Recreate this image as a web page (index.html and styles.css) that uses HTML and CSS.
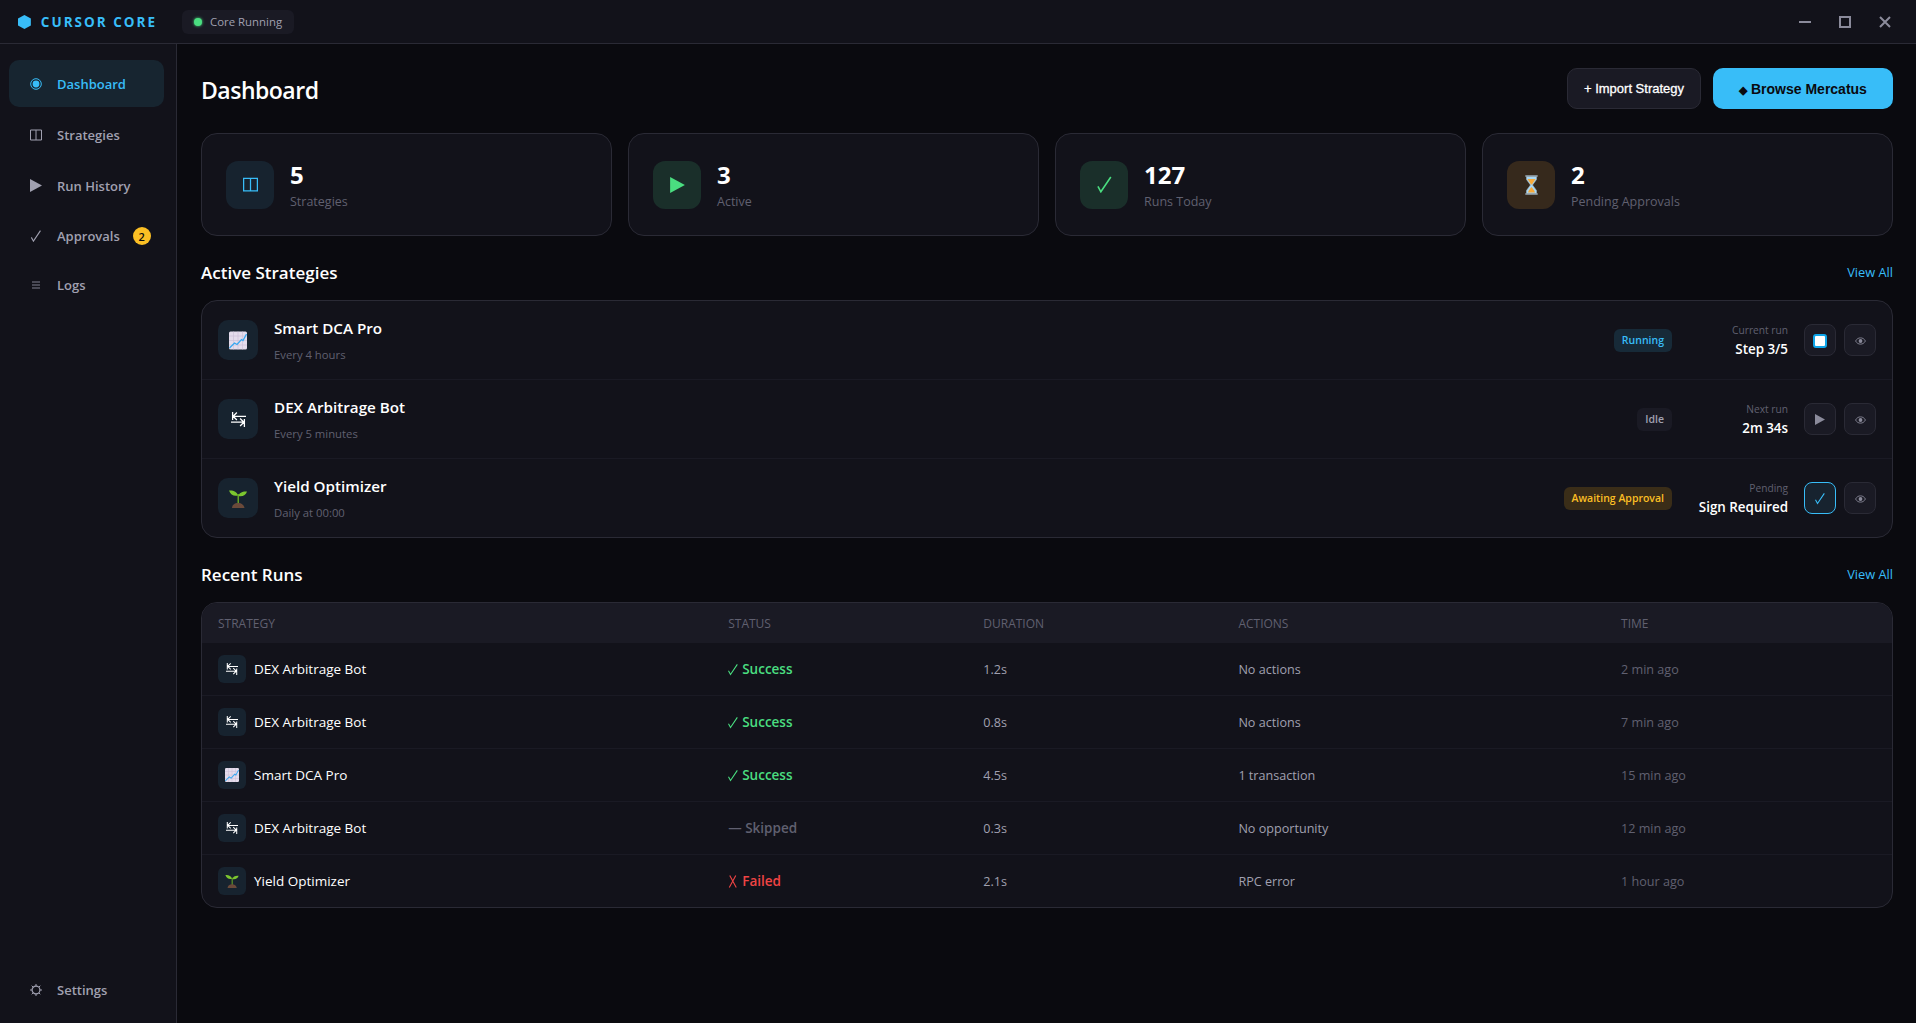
FILE: index.html
```html
<!DOCTYPE html>
<html lang="en">
<head>
  <meta charset="UTF-8" />
  <title>Cursor Core</title>
  <link rel="stylesheet" href="styles.css">
</head>
<body>

  <svg class="sprites" xmlns="http://www.w3.org/2000/svg">
    <symbol id="i-columns" viewBox="0 0 12 12"><path d="M.5 1h11v10H.5zM6 1v10" fill="none" stroke="currentColor"/></symbol>
    <symbol id="i-play" viewBox="0 0 12 13"><path d="M0 0l12 6.500L0 13z" fill="currentColor"/></symbol>
    <symbol id="i-check" viewBox="0 0 12 14"><path d="M.6 8.600L3 13 11.200.8" fill="none" stroke="currentColor" stroke-width="1.300"/></symbol>
    <symbol id="i-chart" viewBox="0 0 18 18">
      <rect width="18" height="18" rx="1.500" fill="#e4dcec"/>
      <path d="M0 4.500h18M0 9h18M0 13.500h18M4.500 0v18M9 0v18M13.500 0v18" stroke="#c9bdd6" stroke-width=".6"/>
      <path d="M.5 16.500l5-5 2.500 1.500 4.500-5 1.500 1 3.500-6.500" fill="none" stroke="#38a8f0" stroke-width="1.300"/>
    </symbol>
    <symbol id="i-swap" viewBox="0 0 14 14">
      <path d="M1 4h13M1.500 0v7.500M2 4l3.500-3.500M2 4l3.500 3.500M0 9.500h13M12.500 6.500V14M12 9.500L8.500 6M12 9.500L8.500 13" fill="none" stroke="#fff" stroke-width="1.200"/>
    </symbol>
    <symbol id="i-sprout" viewBox="0 0 18 19">
      <path d="M8.500 5h1.500v10H8.500z" fill="#63a224"/>
      <path d="M0 1.500C4 1 8 2.500 9 6.500 5 7.500 1.500 6 0 1.500zM9.500 7C10 3.500 14 2 18 2.500 17 6 13.500 8 9.500 7z" fill="#7cc62f"/>
      <path d="M3 19c0-3 2.700-5 6-5 3.500 0 6 2 6.500 5z" fill="#6b4a3a"/>
    </symbol>
    <symbol id="i-hourglass" viewBox="0 0 14 20">
      <path d="M2 1.500h10v3L8 10l4 5.500v3H2v-3L6 10 2 4.500z" fill="#a9d8f5" stroke="#9fb8c8" stroke-width=".6"/>
      <path d="M3 4h8L7.500 9.500h-1zM3.500 17.500c.8-2.500 2-4 3.500-5.500 1.500 1.500 2.700 3 3.500 5.500z" fill="#f6a93b"/>
      <path d="M.8 1h12.400M.8 19h12.400" stroke="#9aa9b3" stroke-width="1.600"/>
    </symbol>
    <symbol id="i-eye" viewBox="0 0 14 10">
      <path d="M.7 5C2.500 2 4.500 1 7 1s4.500 1 6.300 4C11.500 8 9.500 9 7 9S2.500 8 .7 5z" fill="none" stroke="currentColor" stroke-width="1.100"/>
      <circle cx="7" cy="5" r="2.400" fill="currentColor"/>
    </symbol>
  </svg>

  <header class="titlebar">
    <div class="brand">
      <svg class="brand-icon" viewBox="0 0 13 14"><path d="M6.500 0L13 3.500v7L6.500 14 0 10.500v-7z" fill="currentColor"/></svg>
      <span class="brand-name">CURSOR CORE</span>
    </div>
    <div class="core-status"><span class="core-dot"></span>Core Running</div>
    <div class="window-controls">
      <span class="window-btn"><svg viewBox="0 0 12 12"><path d="M0 6h12"/></svg></span>
      <span class="window-btn"><svg viewBox="0 0 12 12"><path d="M1 1h10v10H1z"/></svg></span>
      <span class="window-btn"><svg viewBox="0 0 12 12"><path d="M1 1l10 10M11 1L1 11"/></svg></span>
    </div>
  </header>

  <div class="layout">
    <nav class="sidebar">
      <a class="nav-item active">
        <svg class="nav-icon" viewBox="0 0 12 12"><circle cx="6" cy="6" r="5.300" fill="none" stroke="currentColor"/><circle cx="6" cy="6" r="3.400" fill="currentColor"/></svg>
        Dashboard
      </a>
      <a class="nav-item"><svg class="nav-icon"><use href="#i-columns"/></svg>Strategies</a>
      <a class="nav-item"><svg class="nav-icon nav-icon-play"><use href="#i-play"/></svg>Run History</a>
      <a class="nav-item nav-item-46"><svg class="nav-icon"><use href="#i-check"/></svg>Approvals<span class="nav-badge">2</span></a>
      <a class="nav-item nav-item-44">
        <svg class="nav-icon nav-icon-small" viewBox="0 0 8 8"><path d="M0 1h8M0 4h8M0 7h8" stroke="currentColor" stroke-width=".8"/></svg>
        Logs
      </a>
      <a class="nav-item nav-settings">
        <svg class="nav-icon" viewBox="0 0 12 12"><circle cx="6" cy="6" r="3.900" fill="none" stroke="currentColor" stroke-width="1.200"/><path d="M6 0v2M6 10v2M0 6h2M10 6h2M1.700 1.700l1.400 1.400M8.900 8.900l1.400 1.400M1.700 10.300l1.400-1.400M8.900 3.100l1.400-1.400" stroke="currentColor"/></svg>
        Settings
      </a>
    </nav>

    <main class="main">
      <div class="page-header">
        <h1>Dashboard</h1>
        <div class="page-actions">
          <button class="btn">+ Import Strategy</button>
          <button class="btn btn-primary"><span class="btn-diamond">◆</span> Browse Mercatus</button>
        </div>
      </div>

      <div class="stats">
        <div class="stat-card">
          <div class="stat-icon blue"><svg class="stat-svg-columns"><use href="#i-columns"/></svg></div>
          <div><div class="stat-value">5</div><div class="stat-label">Strategies</div></div>
        </div>
        <div class="stat-card">
          <div class="stat-icon green"><svg class="stat-svg-play"><use href="#i-play"/></svg></div>
          <div><div class="stat-value">3</div><div class="stat-label">Active</div></div>
        </div>
        <div class="stat-card">
          <div class="stat-icon green"><svg class="stat-svg-check"><use href="#i-check"/></svg></div>
          <div><div class="stat-value">127</div><div class="stat-label">Runs Today</div></div>
        </div>
        <div class="stat-card">
          <div class="stat-icon amber"><svg class="stat-svg-hourglass"><use href="#i-hourglass"/></svg></div>
          <div><div class="stat-value">2</div><div class="stat-label">Pending Approvals</div></div>
        </div>
      </div>

      <div class="section-head">
        <h2>Active Strategies</h2>
        <a class="view-all">View All</a>
      </div>
      <div class="panel">
        <div class="strategy">
          <div class="strategy-icon"><svg class="icon-chart"><use href="#i-chart"/></svg></div>
          <div class="strategy-info"><div class="strategy-name">Smart DCA Pro</div><div class="strategy-sub">Every 4 hours</div></div>
          <span class="badge badge-running">Running</span>
          <div class="strategy-meta"><div class="meta-label">Current run</div><div class="meta-value">Step 3/5</div></div>
          <div class="strategy-actions">
            <span class="icon-btn"><span class="stop-glyph"></span></span>
            <span class="icon-btn"><svg class="icon-eye"><use href="#i-eye"/></svg></span>
          </div>
        </div>
        <div class="strategy">
          <div class="strategy-icon"><svg class="icon-swap"><use href="#i-swap"/></svg></div>
          <div class="strategy-info"><div class="strategy-name">DEX Arbitrage Bot</div><div class="strategy-sub">Every 5 minutes</div></div>
          <span class="badge badge-idle">Idle</span>
          <div class="strategy-meta"><div class="meta-label">Next run</div><div class="meta-value">2m 34s</div></div>
          <div class="strategy-actions">
            <span class="icon-btn"><svg class="icon-play"><use href="#i-play"/></svg></span>
            <span class="icon-btn"><svg class="icon-eye"><use href="#i-eye"/></svg></span>
          </div>
        </div>
        <div class="strategy">
          <div class="strategy-icon"><svg class="icon-chart"><use href="#i-sprout"/></svg></div>
          <div class="strategy-info"><div class="strategy-name">Yield Optimizer</div><div class="strategy-sub">Daily at 00:00</div></div>
          <span class="badge badge-awaiting">Awaiting Approval</span>
          <div class="strategy-meta"><div class="meta-label">Pending</div><div class="meta-value">Sign Required</div></div>
          <div class="strategy-actions">
            <span class="icon-btn icon-btn-accent"><svg class="icon-check"><use href="#i-check"/></svg></span>
            <span class="icon-btn"><svg class="icon-eye"><use href="#i-eye"/></svg></span>
          </div>
        </div>
      </div>

      <div class="section-head">
        <h2>Recent Runs</h2>
        <a class="view-all">View All</a>
      </div>
      <div class="panel">
        <div class="run run-head">
          <span>Strategy</span><span>Status</span><span>Duration</span><span>Actions</span><span>Time</span>
        </div>
        <div class="run">
          <span class="run-name"><span class="run-icon"><svg class="icon-swap-small"><use href="#i-swap"/></svg></span>DEX Arbitrage Bot</span>
          <span class="run-status success"><svg class="status-check"><use href="#i-check"/></svg>Success</span>
          <span class="run-cell">1.2s</span><span class="run-cell">No actions</span><span class="run-cell run-time">2 min ago</span>
        </div>
        <div class="run">
          <span class="run-name"><span class="run-icon"><svg class="icon-swap-small"><use href="#i-swap"/></svg></span>DEX Arbitrage Bot</span>
          <span class="run-status success"><svg class="status-check"><use href="#i-check"/></svg>Success</span>
          <span class="run-cell">0.8s</span><span class="run-cell">No actions</span><span class="run-cell run-time">7 min ago</span>
        </div>
        <div class="run">
          <span class="run-name"><span class="run-icon"><svg class="icon-chart-small"><use href="#i-chart"/></svg></span>Smart DCA Pro</span>
          <span class="run-status success"><svg class="status-check"><use href="#i-check"/></svg>Success</span>
          <span class="run-cell">4.5s</span><span class="run-cell">1 transaction</span><span class="run-cell run-time">15 min ago</span>
        </div>
        <div class="run">
          <span class="run-name"><span class="run-icon"><svg class="icon-swap-small"><use href="#i-swap"/></svg></span>DEX Arbitrage Bot</span>
          <span class="run-status skipped">— Skipped</span>
          <span class="run-cell">0.3s</span><span class="run-cell">No opportunity</span><span class="run-cell run-time">12 min ago</span>
        </div>
        <div class="run">
          <span class="run-name"><span class="run-icon"><svg class="icon-chart-small"><use href="#i-sprout"/></svg></span>Yield Optimizer</span>
          <span class="run-status failed"><svg class="status-x" viewBox="0 0 10 14"><path d="M1.500.5L8.500 13.500M8 .5L1 13.500" fill="none" stroke="currentColor" stroke-width="1.200"/></svg>Failed</span>
          <span class="run-cell">2.1s</span><span class="run-cell">RPC error</span><span class="run-cell run-time">1 hour ago</span>
        </div>
      </div>
    </main>
  </div>

</body>
</html>
```

FILE: styles.css
```css
html, body {
  margin: 0;
  padding: 0;
  height: 100%;
  overflow: hidden;
  background: #0a0a0f;
  color: #fff;
  font-family: "Open Sans", "Noto Sans", sans-serif;
}

.sprites {
  display: none;
}

/* title bar */
.titlebar {
  display: flex;
  align-items: center;
  height: 43px;
  padding: 0 11px 0 18px;
  background: #12121a;
  border-bottom: 1px solid #2a2a35;
}

.brand {
  display: flex;
  align-items: center;
  gap: 10px;
  width: 139px;
  color: #38bdf8;
}

.brand-icon {
  width: 13px;
  height: 14px;
}

.brand-name {
  font-size: 13.500px;
  font-weight: 700;
  letter-spacing: 2px;
  white-space: nowrap;
}

.core-status {
  display: flex;
  align-items: center;
  gap: 8px;
  height: 24px;
  margin-left: 25px;
  padding: 0 12px;
  border-radius: 6px;
  background: #1a1a24;
  color: #a0a0b0;
  font-size: 11.400px;
}

.core-dot {
  width: 8px;
  height: 8px;
  border-radius: 50%;
  background: #4ade80;
  box-shadow: 0 0 3px #4ade80;
}

.window-controls {
  display: flex;
  margin-left: auto;
}

.window-btn {
  display: flex;
  align-items: center;
  justify-content: center;
  width: 40px;
  height: 32px;
}

.window-btn svg {
  width: 12px;
  height: 12px;
  fill: none;
  stroke: #8b8b9b;
  stroke-width: 2;
}

/* layout */
.layout {
  display: flex;
  height: 979px;
}

.sidebar {
  display: flex;
  flex-direction: column;
  gap: 4px;
  flex: none;
  box-sizing: border-box;
  width: 177px;
  padding: 16px 12px 10px 9px;
  background: #12121a;
  border-right: 1px solid #2a2a35;
}

.nav-item {
  display: flex;
  align-items: center;
  height: 47px;
  padding-left: 21px;
  border-radius: 10px;
  color: #a0a0b0;
  font-size: 13px;
  font-weight: 600;
}

.nav-item-46 {
  height: 46px;
}

.nav-item-44 {
  height: 44px;
}

.nav-item.active {
  background: #172530;
  color: #38bdf8;
}

.nav-settings {
  margin-top: auto;
}

.nav-icon {
  flex: none;
  width: 12px;
  height: 12px;
  margin-right: 15px;
}

.nav-icon-play {
  height: 13px;
}

.nav-icon-small {
  width: 8px;
  height: 8px;
  margin: 0 17px 0 2px;
}

.nav-badge {
  display: flex;
  align-items: center;
  justify-content: center;
  width: 18px;
  height: 18px;
  margin-left: 13px;
  border-radius: 50%;
  background: #fbbf24;
  color: #0a0a0f;
  font-size: 11px;
  font-weight: 600;
}

/* main */
.main {
  flex: 1;
  min-width: 0;
  padding: 24px 23px 0 24px;
}

.page-header {
  display: flex;
  align-items: center;
  justify-content: space-between;
  margin-bottom: 24px;
}

h1 {
  margin: 2px 0 0;
  font-size: 23px;
  font-weight: 600;
  letter-spacing: -0.5px;
}

.page-actions {
  display: flex;
  gap: 12px;
}

.btn {
  height: 41px;
  width: 134px;
  padding: 0;
  border: 1px solid #2a2a35;
  border-radius: 10px;
  background: #1a1a24;
  color: #fff;
  font-family: "Liberation Sans", Arial, sans-serif;
  font-size: 13px;
  font-weight: 400;
  -webkit-text-stroke: 0.3px #fff;
}

.btn-primary {
  width: 180px;
  border: 0;
  background: #38bdf8;
  color: #0a0a0f;
  font-size: 14px;
  font-weight: 700;
  -webkit-text-stroke: 0;
}

.btn-diamond {
  font-size: 11px;
}

.stats {
  display: grid;
  grid-template-columns: repeat(4, 1fr);
  gap: 16px;
}

.stat-card {
  display: flex;
  align-items: center;
  gap: 16px;
  height: 103px;
  box-sizing: border-box;
  padding: 0 24px;
  border: 1px solid #2a2a35;
  border-radius: 16px;
  background: #12121a;
}

.stat-icon {
  display: flex;
  align-items: center;
  justify-content: center;
  flex: none;
  width: 48px;
  height: 48px;
  border-radius: 12px;
}

.stat-icon.blue {
  background: #17232f;
  color: #38bdf8;
}

.stat-icon.green {
  background: #1a2f2a;
  color: #4ade80;
}

.stat-icon.amber {
  background: #36291c;
}

.stat-svg-columns {
  width: 15px;
  height: 15px;
}

.stat-svg-play {
  width: 15px;
  height: 16px;
}

.stat-svg-check {
  width: 15px;
  height: 17px;
}

.stat-svg-hourglass {
  width: 15px;
  height: 20px;
}

.stat-value {
  margin-top: 2px;
  font-size: 24px;
  font-weight: 700;
  line-height: 32px;
}

.stat-label {
  margin-top: 1px;
  color: #606070;
  font-size: 12.500px;
  line-height: 20px;
}

.section-head {
  display: flex;
  align-items: center;
  justify-content: space-between;
  height: 24px;
  margin: 24px 0 16px;
}

h2 {
  margin: 0;
  font-size: 17px;
  font-weight: 600;
}

.view-all {
  color: #38bdf8;
  font-size: 12.800px;
  font-weight: 500;
}

.panel {
  overflow: hidden;
  border: 1px solid #2a2a35;
  border-radius: 16px;
  background: #12121a;
}

/* strategies */
.strategy {
  display: flex;
  align-items: center;
  box-sizing: border-box;
  height: 79px;
  padding: 0 16px;
  border-bottom: 1px solid #1a1a24;
}

.strategy:last-child {
  height: 78px;
  border-bottom: 0;
}

.strategy-icon {
  display: flex;
  align-items: center;
  justify-content: center;
  flex: none;
  width: 40px;
  height: 40px;
  border-radius: 10px;
  background: #17232f;
}

.icon-chart {
  width: 18px;
  height: 19px;
}

.icon-swap {
  width: 15px;
  height: 15px;
}

.strategy-info {
  flex: 1;
  margin-left: 16px;
}

.strategy-name {
  font-size: 15.200px;
  font-weight: 600;
  line-height: 20px;
  margin-bottom: 8px;
}

.strategy-sub {
  margin-top: 9px;
  color: #606070;
  font-size: 11.300px;
  line-height: 16px;
}

.badge {
  height: 23px;
  padding: 0 8px;
  border-radius: 6px;
  font-size: 10.500px;
  font-weight: 600;
  line-height: 23px;
}

.badge-running {
  background: #172a38;
  color: #38bdf8;
}

.badge-idle {
  background: #1a1a24;
  color: #a0a0b0;
}

.badge-awaiting {
  background: #3a2d18;
  color: #fbbf24;
}

.strategy-meta {
  width: 100px;
  margin-left: 16px;
  text-align: right;
}

.meta-label {
  color: #606070;
  font-size: 10.200px;
  line-height: 16px;
}

.meta-value {
  margin-top: 1px;
  font-size: 13.400px;
  font-weight: 600;
  line-height: 20px;
}

.strategy-actions {
  display: flex;
  gap: 8px;
  margin-left: 16px;
}

.icon-btn {
  display: flex;
  align-items: center;
  justify-content: center;
  box-sizing: border-box;
  width: 32px;
  height: 32px;
  border: 1px solid #2a2a35;
  border-radius: 8px;
  background: #1a1a24;
  color: #8b8b9b;
}

.icon-btn-accent {
  border-color: #38bdf8;
  background: #17232f;
  color: #38bdf8;
}

.stop-glyph {
  box-sizing: border-box;
  width: 14px;
  height: 14px;
  margin-top: 2px;
  border: 2px solid #0ea5e9;
  border-radius: 3px;
  background: #fff;
}

.icon-eye {
  width: 11px;
  height: 8px;
  margin-top: 2px;
}

.icon-play {
  width: 10px;
  height: 11px;
}

.icon-check {
  width: 10px;
  height: 13px;
}

/* runs */
.run {
  display: grid;
  grid-template-columns: 2fr 1fr 1fr 1.5fr 1.125fr;
  align-items: center;
  box-sizing: border-box;
  height: 53px;
  border-bottom: 1px solid #1a1a24;
  color: #a0a0b0;
  font-size: 12.600px;
}

.run:last-child {
  height: 52px;
  border-bottom: 0;
}

.run > span {
  padding: 0 16px;
}

.run > .run-cell {
  padding-top: 1px;
}

.run-head {
  height: 40px;
  border-bottom: 0;
  background: #1a1a24;
  color: #606070;
  font-size: 12px;
  font-weight: 500;
  text-transform: uppercase;
}

.run-name {
  display: flex;
  align-items: center;
  gap: 8px;
  color: #fff;
  font-size: 13.500px;
}

.run-icon {
  display: flex;
  align-items: center;
  justify-content: center;
  width: 28px;
  height: 28px;
  border-radius: 6px;
  background: #17232f;
}

.icon-swap-small {
  width: 12px;
  height: 12px;
}

.icon-chart-small {
  width: 14px;
  height: 14px;
}

.run-status {
  display: flex;
  align-items: center;
  gap: 4px;
  font-size: 13.500px;
  font-weight: 600;
}

.status-check {
  width: 10px;
  height: 13px;
}

.status-x {
  width: 10px;
  height: 13px;
}

.success {
  color: #4ade80;
}

.skipped {
  color: #606070;
}

.failed {
  color: #ef4444;
}

.run-time {
  color: #606070;
}
```
